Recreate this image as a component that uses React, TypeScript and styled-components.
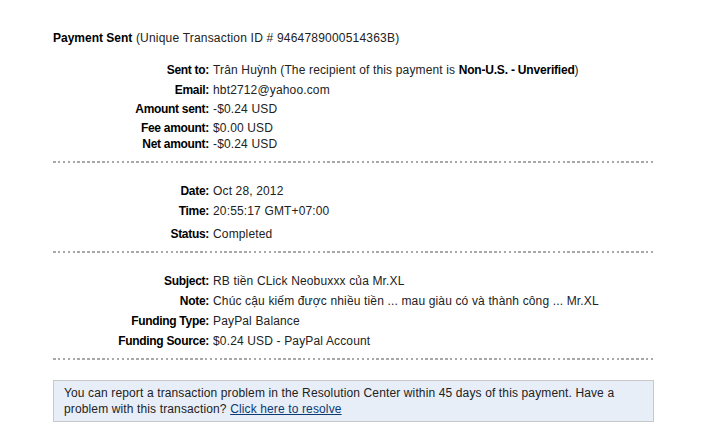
import { createGlobalStyle, styled } from "styled-components";

const GlobalStyle = createGlobalStyle`
  body {
    margin: 0;
    background: #fff;
    font-family: "Liberation Sans", Arial, sans-serif;
    font-size: 12px;
    color: #222;
  }
`;

type Item = { label: string; value: React.ReactNode; gap?: number };

const sections: Item[][] = [
  [
    {
      label: "Sent to:",
      value: (
        <>
          Trân Huỳnh (The recipient of this payment is{" "}
          <b>Non-U.S. - Unverified</b>)
        </>
      ),
      gap: 0,
    },
    { label: "Email:", value: "hbt2712@yahoo.com", gap: 4 },
    { label: "Amount sent:", value: "-$0.24 USD", gap: 3 },
    { label: "Fee amount:", value: "$0.00 USD", gap: 3 },
    { label: "Net amount:", value: "-$0.24 USD", gap: 0 },
  ],
  [
    { label: "Date:", value: "Oct 28, 2012", gap: 0 },
    { label: "Time:", value: "20:55:17 GMT+07:00", gap: 4 },
    { label: "Status:", value: "Completed", gap: 7 },
  ],
  [
    { label: "Subject:", value: "RB tiền CLick Neobuxxx của Mr.XL", gap: 0 },
    {
      label: "Note:",
      value: "Chúc cậu kiếm được nhiều tiền ... mau giàu có và thành công ... Mr.XL",
      gap: 4,
    },
    { label: "Funding Type:", value: "PayPal Balance", gap: 4 },
    { label: "Funding Source:", value: "$0.24 USD - PayPal Account", gap: 4 },
  ],
];

const App = () => {
  return (
    <>
      <GlobalStyle />
      <Page>
        <Title>
          <b>Payment Sent</b> (Unique Transaction ID # 9464789000514363B)
        </Title>
        {sections.map((rows, idx) => (
          <Section key={idx} first={idx === 0}>
            {rows.map((row) => (
              <Row key={row.label} gap={row.gap ?? 4}>
                <Label>{row.label}</Label>
                <Value>{row.value}</Value>
              </Row>
            ))}
            <Divider />
          </Section>
        ))}
        <Notice>
          You can report a transaction problem in the Resolution Center within
          45 days of this payment. Have a problem with this transaction?{" "}
          <a href="#">Click here to resolve</a>
        </Notice>
      </Page>
    </>
  );
};

const Page = styled.div`
  width: 602px;
  padding: 30px 0 0 53px;
`;

const Title = styled.div`
  line-height: 16px;
  letter-spacing: 0.2px;
  b {
    color: #000;
    letter-spacing: 0;
  }
`;

// 섹션 하나 (행 묶음 + 점선)
const Section = styled.div<{ first?: boolean }>`
  padding-top: ${({ first }) => (first ? "16px" : "20px")};
`;

const Row = styled.div<{ gap: number }>`
  display: grid;
  grid-template-columns: 156px 1fr;
  column-gap: 4px;
  line-height: 16px;
  margin-top: ${({ gap }) => gap}px;
  b {
    color: #000;
    letter-spacing: -0.2px;
  }
`;

const Label = styled.div`
  text-align: right;
  font-weight: 700;
  color: #000;
  letter-spacing: -0.3px;
  white-space: nowrap;
`;

const Value = styled.div`
  letter-spacing: 0.15px;
  white-space: nowrap;
`;

// 점선 구분선
const Divider = styled.div`
  height: 2px;
  margin-top: 9px;
  background-image: repeating-linear-gradient(
    to right,
    #a8a8a8 0 2.5px,
    transparent 2.5px 4.9px
  );
`;

const Notice = styled.div`
  margin-top: 20px;
  width: 579px;
  border: 1px solid #c9c9c9;
  background: #e8eef8;
  padding: 5px 10px 4px;
  line-height: 15.5px;
  letter-spacing: 0.13px;
  a {
    color: #0b3a75;
    text-decoration: underline;
  }
`;

export default App;
